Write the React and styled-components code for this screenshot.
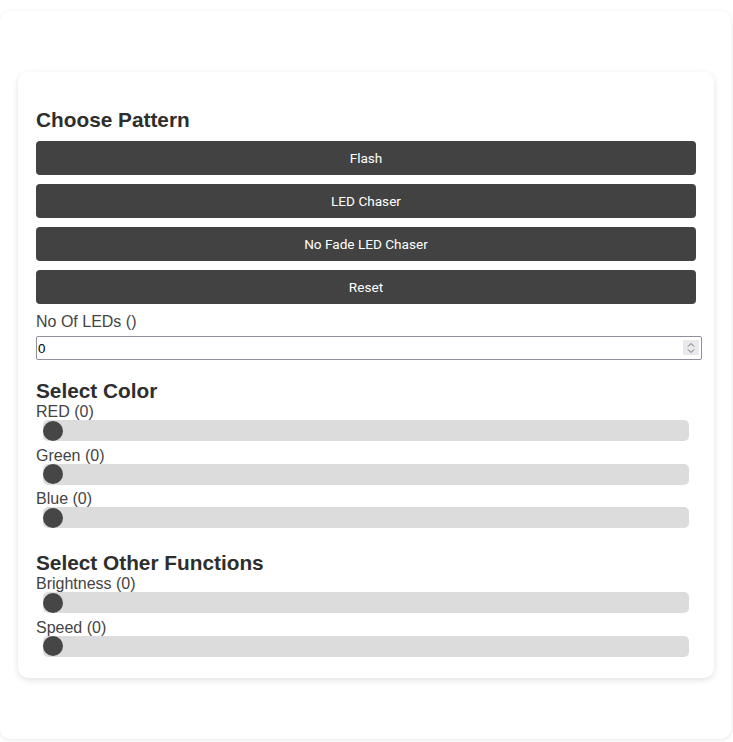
import React from "react";
import styled, { createGlobalStyle } from "styled-components";

const GlobalStyle = createGlobalStyle`
  body {
    margin: 0;
    background: #ffffff;
    font-family: "Liberation Sans", Arial, sans-serif;
  }
`;

const Page = styled.div`
  box-sizing: border-box;
  width: 731px;
  margin: 11px 2px 4px 0;
  padding: 61px 17px 61px 18px;
  border-radius: 10px;
  background: #fff;
  box-shadow: 0 1px 4px rgba(0, 0, 0, 0.1);
`;

const Card = styled.div`
  box-sizing: border-box;
  width: 696px;
  padding: 36px 18px 15.5px;
  border-radius: 10px;
  background: #fff;
  box-shadow: 0 2px 6px rgba(0, 0, 0, 0.12);
`;

const Heading = styled.h3`
  margin: ${(p) => p.$top || 0}px 0 ${(p) => p.$bottom || 0}px;
  font-size: 20.8px;
  font-weight: bold;
  color: #2e2e2e;
`;

const PatternButton = styled.button`
  display: block;
  width: 100%;
  height: 34px;
  margin: 0 0 9px;
  border: none;
  border-radius: 4px;
  background: #424242;
  color: #fff;
  font-family: Roboto, "Liberation Sans", sans-serif;
  font-size: 13.6px;
  cursor: pointer;
`;

const Label = styled.label`
  display: block;
  font-size: 16px;
  line-height: 18px;
  color: #444;
  margin-bottom: ${(p) => p.$bottom || 0}px;
`;

const NumberWrap = styled.div`
  position: relative;
  width: 666px;
`;

const NumberInput = styled.input.attrs({ type: "number" })`
  box-sizing: border-box;
  display: block;
  width: 100%;
  height: 24px;
  margin: 0;
  padding: 0 1px;
  border: 1px solid #8f8f9d;
  border-radius: 2px;
  font-family: "Liberation Sans", Arial, sans-serif;
  font-size: 13.33px;
  color: #000;
  background: #fff;
  -moz-appearance: textfield;

  &::-webkit-inner-spin-button,
  &::-webkit-outer-spin-button {
    -webkit-appearance: none;
    margin: 0;
  }
`;

const Spinner = styled.span`
  position: absolute;
  top: 4px;
  right: 3px;
  width: 16px;
  height: 15px;
  background: #e9e9ed;
  display: flex;
  align-items: center;
  justify-content: center;
  pointer-events: none;
`;

const Slider = styled.input.attrs({ type: "range", min: 0, max: 255 })`
  -webkit-appearance: none;
  appearance: none;
  display: block;
  width: 98%;
  height: 21px;
  margin: -1px auto 5.5px;
  padding: 0;
  border-radius: 5px;
  background: #dcdcdc;
  outline: none;

  &::-webkit-slider-thumb {
    -webkit-appearance: none;
    appearance: none;
    width: 20px;
    height: 20px;
    border-radius: 50%;
    background: #464646;
    cursor: pointer;
  }
`;

const patterns = ["Flash", "LED Chaser", "No Fade LED Chaser", "Reset"];
const colors = ["RED", "Green", "Blue"];
const others = ["Brightness", "Speed"];

export default function App() {
  return (
    <>
      <GlobalStyle />
      <Page>
        <Card>
          <Heading $bottom={9}>Choose Pattern</Heading>
          {patterns.map((p) => (
            <PatternButton key={p}>{p}</PatternButton>
          ))}
          <Label $bottom={5}>No Of LEDs ()</Label>
          <NumberWrap>
            <NumberInput defaultValue={0} />
            <Spinner>
              <svg width="8" height="12" viewBox="0 0 8 12" fill="none" stroke="#6b6b6b" strokeWidth="1">
                <path d="M1 4.5 L4 1.5 L7 4.5" />
                <path d="M1 7.5 L4 10.5 L7 7.5" />
              </svg>
            </Spinner>
          </NumberWrap>

          <Heading $top={19}>Select Color</Heading>
          {colors.map((c) => (
            <React.Fragment key={c}>
              <Label>{c} (0)</Label>
              <Slider defaultValue={0} />
            </React.Fragment>
          ))}

          <Heading $top={23}>Select Other Functions</Heading>
          {others.map((o) => (
            <React.Fragment key={o}>
              <Label>{o} (0)</Label>
              <Slider defaultValue={0} />
            </React.Fragment>
          ))}
        </Card>
      </Page>
    </>
  );
}
